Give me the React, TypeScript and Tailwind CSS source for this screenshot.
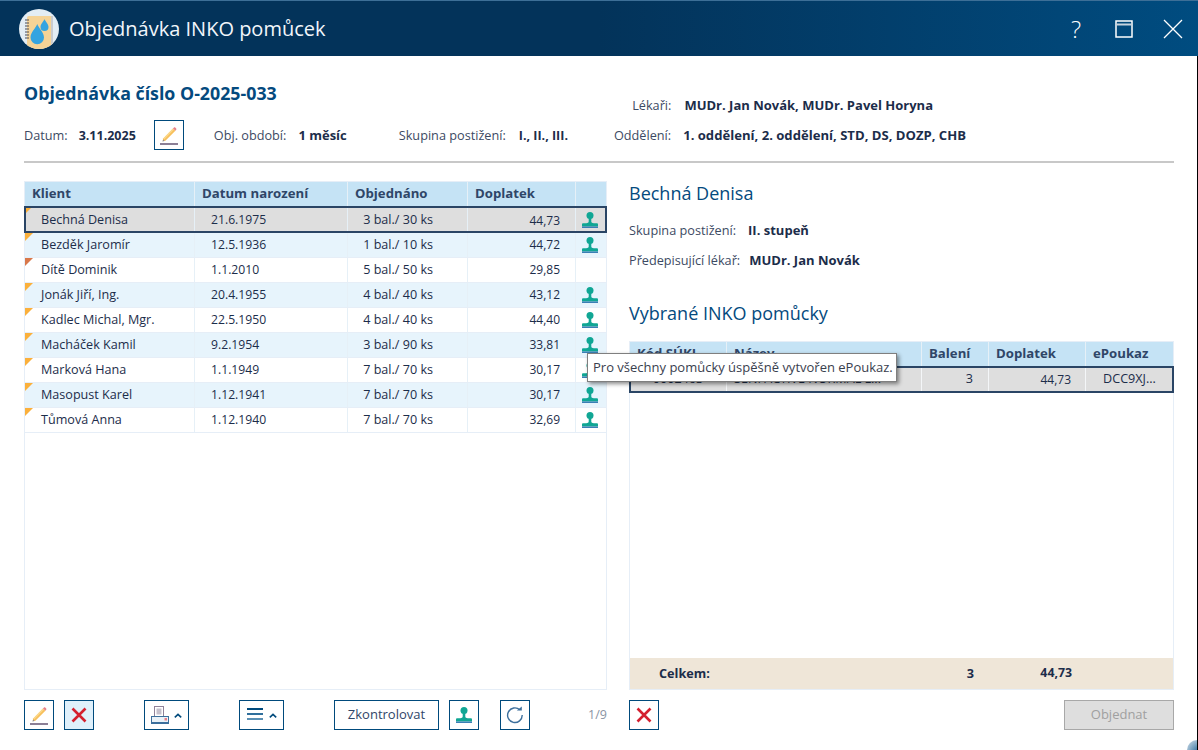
import React from "react";

const rows = [
  ["Bechná Denisa", "21.6.1975", "3 bal./ 30 ks", "44,73", true, "o"],
  ["Bezděk Jaromír", "12.5.1936", "1 bal./ 10 ks", "44,72", true, "o"],
  ["Dítě Dominik", "1.1.2010", "5 bal./ 50 ks", "29,85", false, "r"],
  ["Jonák Jiří, Ing.", "20.4.1955", "4 bal./ 40 ks", "43,12", true, "o"],
  ["Kadlec Michal, Mgr.", "22.5.1950", "4 bal./ 40 ks", "44,40", true, "o"],
  ["Macháček Kamil", "9.2.1954", "3 bal./ 90 ks", "33,81", true, "o"],
  ["Marková Hana", "1.1.1949", "7 bal./ 70 ks", "30,17", true, "o"],
  ["Masopust Karel", "1.12.1941", "7 bal./ 70 ks", "30,17", true, "o"],
  ["Tůmová Anna", "1.12.1940", "7 bal./ 70 ks", "32,69", true, "o"],
] as const;

const Stamp = () => (
  <svg width="16" height="16" viewBox="0 0 16 16">
    <circle cx="8" cy="3.500" r="3.500" fill="#10a694" />
    <path d="M6.700 6h2.600v3.500c0 1.300 1 1.700 2.500 1.700h3c.7 0 1.200.5 1.200 1.200V14.500H0v-2.100c0-.7.5-1.200 1.200-1.200h3c1.500 0 2.500-.4 2.500-1.700z" fill="#10a694" />
    <rect x="0" y="14.500" width="16" height="1.500" fill="#3a7fb5" />
  </svg>
);

const Pencil = () => (
  <svg width="20" height="20" viewBox="0 0 20 20">
    <path d="M4.200 13.500 14 3.400l2.400 2.400-10 10-2.800.4z" fill="#f7c05c" />
    <path d="M4.200 13.500 14 3.400l1 1L5.200 14.600z" fill="#fbd98c" />
    <path d="M14 3.400l1-1c.4-.3.9-.3 1.200 0l1 1c.3.4.3.9 0 1.300l-.8 1.100z" fill="#e8808a" />
    <path d="M4.300 14.600l1.300 1.400-2.200.4z" fill="#8a8a9a" />
    <rect x="1" y="18" width="18" height="2" fill="#8c7f96" />
  </svg>
);

const Cross = () => (
  <svg width="16" height="16" viewBox="0 0 16 16">
    <path d="M1.500 1.500 14.500 14.500M14.500 1.500 1.500 14.500" stroke="#d4202f" strokeWidth="2.600" fill="none" />
  </svg>
);

const Chevron = () => (
  <svg width="8" height="5" viewBox="0 0 8 5">
    <path d="M.8 4.300 4 1.300l3.200 3" stroke="#004a7c" strokeWidth="1.600" fill="none" />
  </svg>
);

const Printer = () => (
  <svg width="18" height="18" viewBox="0 0 18 18">
    <rect x="3.500" y="0.500" width="9" height="10" fill="#fff" stroke="#8f8299" />
    <rect x="5.500" y="2.500" width="5" height="6" fill="#c5c0cc" />
    <rect x="0.500" y="10.500" width="17" height="6" fill="#eaf2f8" stroke="#3c6f9c" />
    <rect x="0" y="16" width="18" height="2" fill="#3c6f9c" />
    <rect x="13.500" y="12" width="2.500" height="2.500" fill="#e8808a" />
  </svg>
);

const Menu = () => (
  <svg width="16" height="14" viewBox="0 0 16 14">
    <rect width="16" height="2" y="0" fill="#004a7c" />
    <rect width="16" height="2" y="5" fill="#2f6f9c" />
    <rect width="16" height="2" y="10" fill="#5a8fb3" />
  </svg>
);

const Refresh = () => (
  <svg width="18" height="18" viewBox="0 0 18 18">
    <path d="M13.800 3.800A7.300 7.300 0 1 0 16.200 9" stroke="#3c6f9c" strokeWidth="1.400" fill="none" />
    <path d="M10.800 4.600h5V.6z" fill="#3c6f9c" />
  </svg>
);

const Drop = ({ x, y, s }: { x: number; y: number; s: number }) => (
  <path
    transform={`translate(${x} ${y}) scale(${s})`}
    d="M5 0C6 3 10 6 10 10a5 5 0 0 1-10 0C0 6 4 3 5 0z"
    fill="#34a4e0"
  />
);

const Logo = () => (
  <svg width="40" height="40" viewBox="0 0 40 40">
    <defs>
      <clipPath id="logoClip"><circle cx="20" cy="20" r="20" /></clipPath>
    </defs>
    <circle cx="20" cy="20" r="20" fill="#e3edf4" />
    <g clipPath="url(#logoClip)">
      <rect x="8" y="7" width="26" height="33" rx="2" fill="#f5d396" />
      <rect x="32" y="7" width="2" height="33" fill="#c9ccd0" />
    </g>
    <path d="M6 11h4M6 14h4M6 17h4M6 20h4M6 23h4M6 26h4M6 29h4" stroke="#4d4d55" strokeWidth="1.200" />
    <Drop x={11.500} y={15} s={1.350} />
    <Drop x={21.500} y={10} s={0.800} />
  </svg>
);

const IconBtn = ({ children, bg = "bg-white" }: { children: React.ReactNode; bg?: string }) => (
  <button className={`w-[30px] h-[30px] flex items-center justify-center border border-[#004a7c] ${bg}`}>{children}</button>
);

const Th = ({ className = "", children }: { className?: string; children?: React.ReactNode }) => (
  <div className={`h-full flex items-center px-[7px] border-r border-[#e6f0f7] text-[13.200px] font-bold text-[#2f4668] ${className}`}>{children}</div>
);

export default function App() {
  return (
    <div className="w-[1198px] h-[750px] flex flex-col bg-white overflow-hidden relative text-[#1c2d4a] text-[13px] font-['Open_Sans',sans-serif]">
      <header className="h-[56px] shrink-0 flex items-center border-t border-[#3d6f97] bg-gradient-to-r from-[#03335a] via-[#03335a] to-[#004c80] pl-[19px]">
        <Logo />
        <span className="ml-[10px] text-[20px] text-[#f2f6fa]">Objednávka INKO pomůcek</span>
        <div className="ml-auto flex items-center pr-[15px] text-white">
          <span className="text-[24px] font-light mr-[34px] leading-none">?</span>
          <svg width="18" height="18" viewBox="0 0 18 18" className="mr-[30px]">
            <rect x="1" y="1" width="16" height="16" fill="none" stroke="#fff" strokeWidth="1.500" />
            <rect x="1" y="3.500" width="16" height="2" fill="#c6d3de" />
          </svg>
          <svg width="20" height="20" viewBox="0 0 20 20">
            <path d="M1 1 19 19M19 1 1 19" stroke="#fff" strokeWidth="1.300" />
          </svg>
        </div>
      </header>

      <div className="mx-[24px] h-[107px] shrink-0 border-b-2 border-[#c8c8c8] flex flex-col">
        <div className="flex h-[64px]">
          <h1 className="mt-[24px] text-[17.800px] leading-[26px] font-bold text-[#044a7e]">Objednávka číslo O-2025-033</h1>
          <div className="ml-auto mr-[241px] mt-[40px] flex h-[20px] items-center">
            <span className="text-[12.700px] text-[#3c4a63]">Lékaři:</span>
            <b className="ml-[13px] font-bold">MUDr. Jan Novák, MUDr. Pavel Horyna</b>
          </div>
        </div>
        <div className="flex items-center h-[30px]">
          <span className="pt-[2px] text-[12.700px] text-[#3c4a63]">Datum:</span>
          <b className="pt-[2px] ml-[11px] text-[12.500px]">3.11.2025</b>
          <div className="ml-[18px]"><IconBtn><Pencil /></IconBtn></div>
          <span className="pt-[2px] ml-[30px] text-[12.700px] text-[#3c4a63]">Obj. období:</span>
          <b className="pt-[2px] ml-[12px]">1 měsíc</b>
          <span className="pt-[2px] ml-[52px] text-[12.700px] text-[#3c4a63]">Skupina postižení:</span>
          <b className="pt-[2px] ml-[13px] text-[12.500px]">I., II., III.</b>
          <span className="pt-[2px] ml-[46px] text-[12.700px] text-[#3c4a63]">Oddělení:</span>
          <b className="pt-[2px] ml-[12px] text-[13.100px]">1. oddělení, 2. oddělení, STD, DS, DOZP, CHB</b>
        </div>
      </div>

      <div className="mx-[24px] mt-[18px] flex gap-[22px]">
        <div className="w-[583px] h-[509px] border border-[#e6eef7] flex flex-col">
          <div className="h-[24px] flex bg-[#c5e3f5] shrink-0">
            <Th className="w-[170px]">Klient</Th>
            <Th className="w-[153px]">Datum narození</Th>
            <Th className="w-[120px]">Objednáno</Th>
            <Th className="w-[108px]">Doplatek</Th>
            <div className="flex-1" />
          </div>
          {rows.map((r, i) => {
            const sel = i === 0;
            const bg = sel ? "bg-[#dedede]" : i % 2 === 1 ? "bg-[#e7f4fc]" : "bg-white";
            const h = sel ? "h-[27px]" : "h-[25px] border-b border-[#e6eef7]";
            const colLine = "border-r border-[#e6f0f7]";
            const shift = sel ? "pt-[2px]" : "";
            return (
              <div key={i} className={`flex shrink-0 relative text-[12.600px] ${bg} ${h}`}>
                <svg width="10" height="10" viewBox="0 0 10 10" className="absolute left-0 top-0">
                  <path d="M0 0h8L0 8z" fill={r[5] === "o" ? "#fbb03b" : "#d9784a"} />
                </svg>
                <div className={`w-[170px] pl-[16px] flex items-center ${shift} ${colLine}`}>{r[0]}</div>
                <div className={`w-[153px] pl-[16px] flex items-center text-[12.200px] ${shift} ${colLine}`}>{r[1]}</div>
                <div className={`w-[120px] pr-[34px] flex items-center justify-end ${shift} ${colLine}`}>{r[2]}</div>
                <div className={`w-[108px] pr-[15px] flex items-center justify-end text-[12px] ${shift} ${colLine}`}>{r[3]}</div>
                <div className="flex-1 flex items-center justify-center pr-[2px]">{r[4] && <Stamp />}</div>
                {sel && <div className="absolute -inset-x-px inset-y-0 border-2 border-[#2a4565] pointer-events-none" />}
              </div>
            );
          })}
        </div>

        <div className="flex-1 h-[509px] flex flex-col">
          <h2 className="text-[18px] leading-[26px] -mt-[1px] text-[#044a7e]">Bechná Denisa</h2>
          <div className="mt-[15px] flex items-center h-[20px]">
            <span className="text-[12.700px] text-[#3c4a63]">Skupina postižení:</span>
            <b className="ml-[12px]">II. stupeň</b>
          </div>
          <div className="mt-[10px] flex items-center h-[20px]">
            <span className="text-[12.700px] text-[#3c4a63]">Předepisující lékař:</span>
            <b className="ml-[9px]">MUDr. Jan Novák</b>
          </div>
          <h2 className="mt-[29px] text-[18px] leading-[26px] text-[#044a7e]">Vybrané INKO pomůcky</h2>
          <div className="mt-[15px] flex-1 border border-[#e6eef7] flex flex-col">
            <div className="h-[24px] flex bg-[#c5e3f5] shrink-0">
              <Th className="w-[97px]">Kód SÚKL</Th>
              <Th className="w-[195px]">Název</Th>
              <Th className="w-[67px]">Balení</Th>
              <Th className="w-[97px]">Doplatek</Th>
              <div className="flex-1 flex items-center px-[7px] text-[13.200px] font-bold text-[#2f4668]">ePoukaz</div>
            </div>
            <div className="h-[27px] flex relative bg-[#dedede] shrink-0 text-[12.600px]">
              <div className="w-[97px] flex items-center justify-center border-r border-[#f4f6f8]">0002463</div>
              <div className="w-[195px] flex items-center px-[7px] border-r border-[#f4f6f8] whitespace-nowrap overflow-hidden">SENI ACTIVE NORMAL L...</div>
              <div className="w-[67px] flex items-center justify-end pr-[15px] border-r border-[#f4f6f8]">3</div>
              <div className="w-[97px] flex items-center justify-end pr-[14px] text-[12px] border-r border-[#f4f6f8]">44,73</div>
              <div className="flex-1 flex items-center justify-center">DCC9XJ...</div>
              <div className="absolute -inset-x-px inset-y-0 border-2 border-[#2a4565] pointer-events-none" />
            </div>
            <div className="flex-1" />
            <div className="h-[31px] shrink-0 flex items-center bg-[#efe6d8] font-bold text-[12.700px]">
              <span className="w-[292px] pl-[29px]">Celkem:</span>
              <span className="w-[67px] pr-[15px] text-right">3</span>
              <span className="w-[97px] pr-[14px] text-right text-[12.300px]">44,73</span>
            </div>
          </div>
        </div>
      </div>

      <div className="mx-[24px] mt-[10px] flex h-[30px] items-center">
        <IconBtn><Pencil /></IconBtn>
        <div className="ml-[10px]"><IconBtn bg="bg-[#dff0fb]"><Cross /></IconBtn></div>
        <button className="ml-[50px] w-[45px] h-[30px] border border-[#004a7c] flex items-center justify-center gap-[5px]"><Printer /><Chevron /></button>
        <button className="ml-[50px] w-[45px] h-[30px] border border-[#004a7c] flex items-center justify-center gap-[6px]"><Menu /><Chevron /></button>
        <button className="ml-[50px] w-[105px] h-[30px] border border-[#004a7c] text-[13px] text-[#2f4668]">Zkontrolovat</button>
        <div className="ml-[10px]"><IconBtn><Stamp /></IconBtn></div>
        <div className="ml-[21px]"><IconBtn><Refresh /></IconBtn></div>
        <span className="ml-[58px] w-[20px] text-[12.500px] text-[#8a93a3]">1/9</span>
        <div className="ml-[21px]"><IconBtn><Cross /></IconBtn></div>
        <button className="ml-auto w-[110px] h-[30px] bg-[#dedede] border border-[#a8a8a8] text-[#a0a0a0]">Objednat</button>
      </div>

      <div className="absolute left-[587px] top-[353px] w-[310px] h-[29px] flex items-center pl-[5px] bg-white border border-[#7f7f7f] shadow-[2px_2px_4px_rgba(0,0,0,0.45)] whitespace-nowrap text-[#39404e]">
        Pro všechny pomůcky úspěšně vytvořen ePoukaz.
      </div>

      <div className="absolute left-[1187px] top-[740px] w-[20px] h-[20px] rounded-full bg-[radial-gradient(circle_at_65%_65%,#1d5f94,#d7e4ed)]" />
      <div className="absolute right-0 top-[56px] bottom-0 w-px bg-black" />
    </div>
  );
}
